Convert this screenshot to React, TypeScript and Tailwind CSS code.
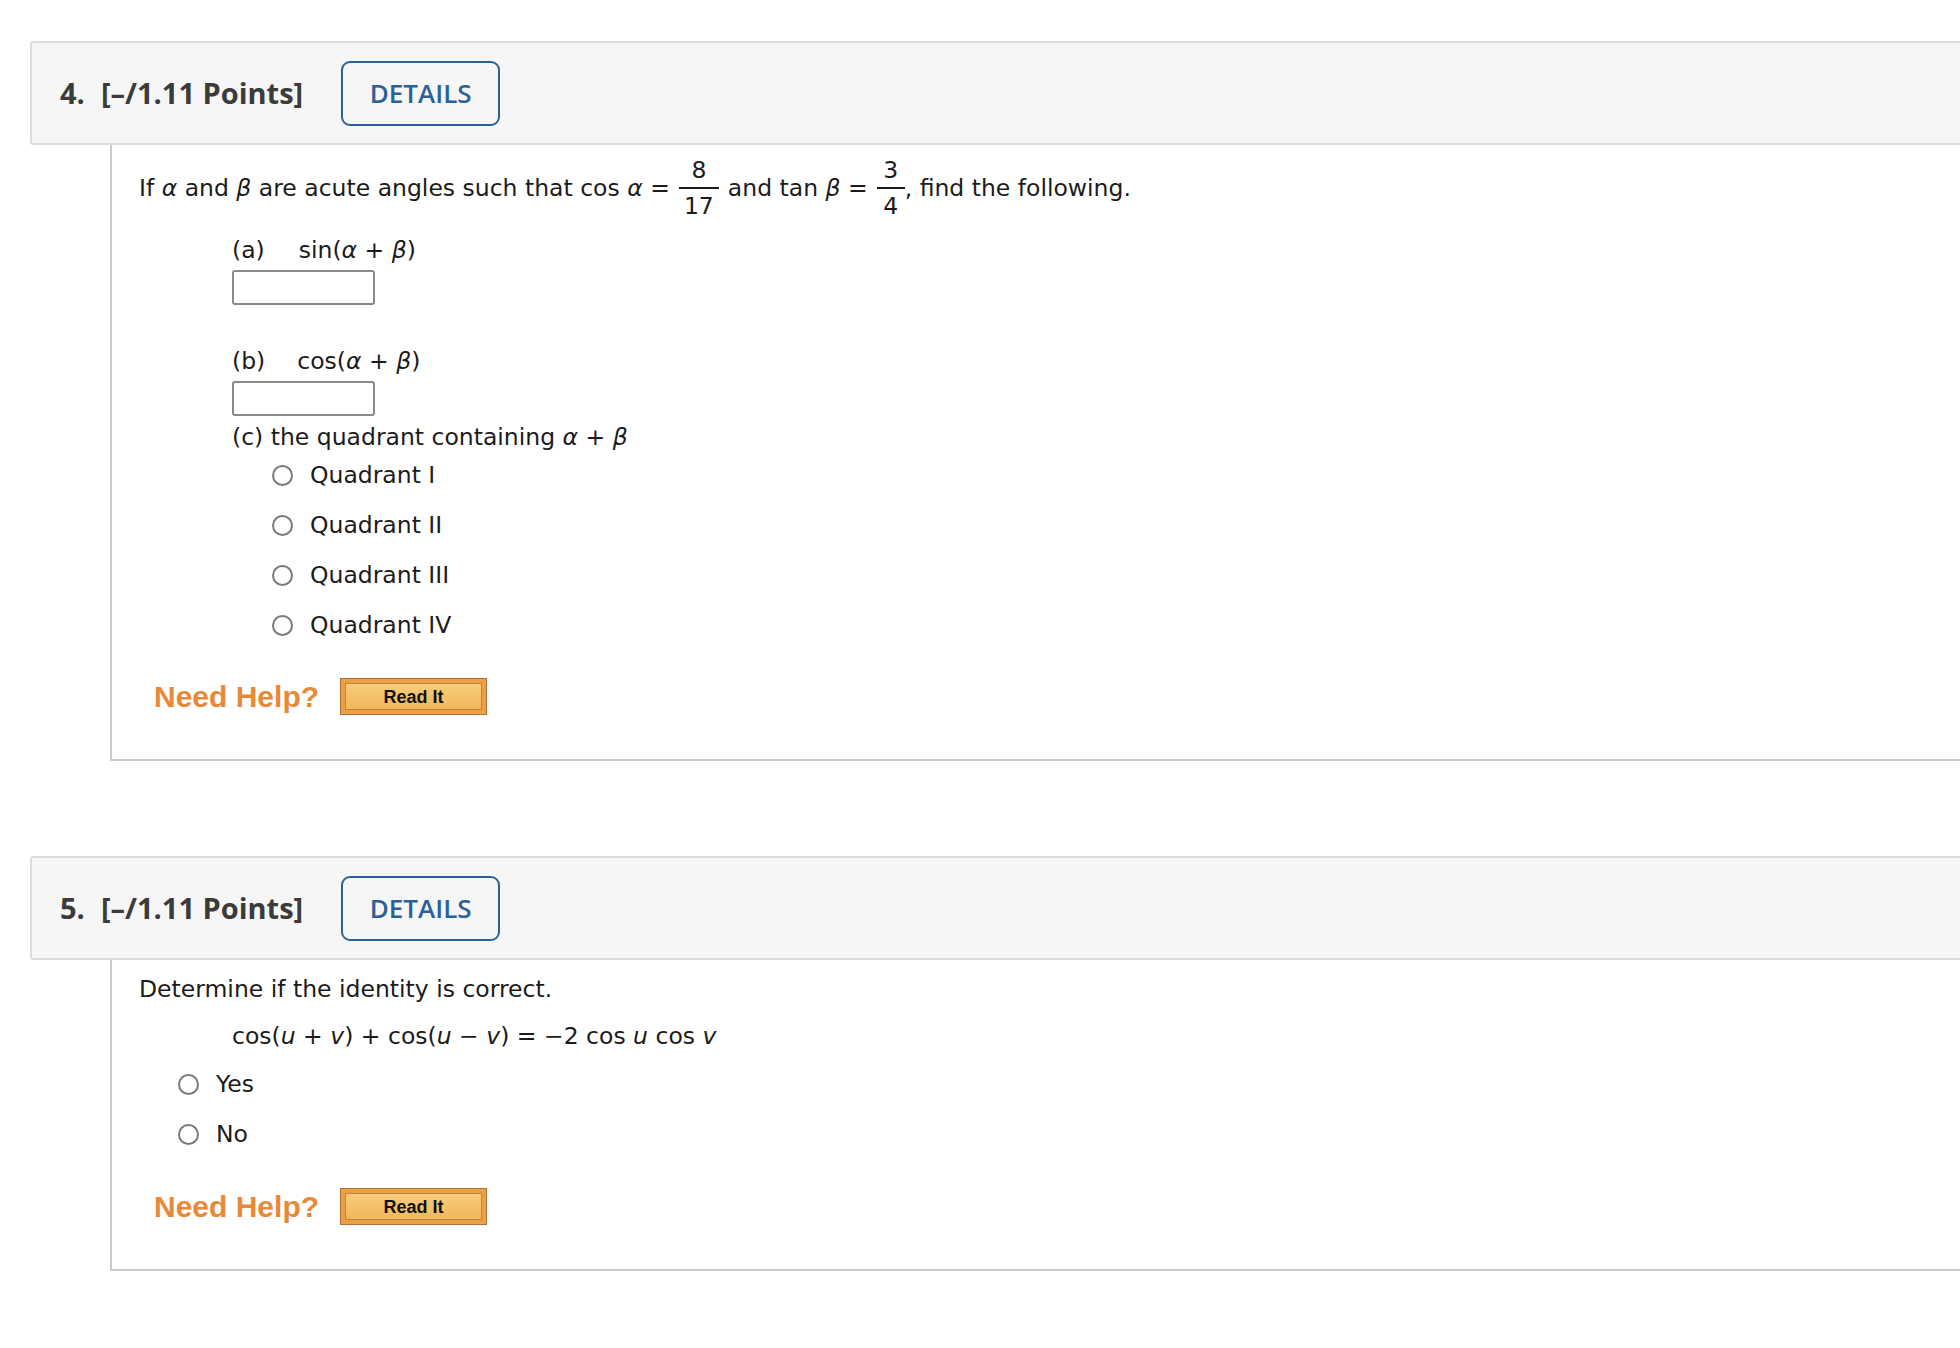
import React from "react";

const body = "font-['DejaVu_Sans',Verdana,sans-serif] text-[23.5px] leading-[28px] text-[#1b1b1b]";

function Header({ num }: { num: string }) {
  return (
    <div className="flex h-[104px] items-center rounded-l-[3px] border-y-2 border-l-2 border-[#dcdcdc] bg-[#f6f6f6] pl-[28px]">
      <div className="font-['Open_Sans',sans-serif] text-[29px] font-bold text-[#3b3b3b]">
        {num}.<span className="ml-[16px]">[–/1.11 Points]</span>
      </div>
      <button className="ml-[38px] h-[65px] w-[159px] rounded-[9px] border-2 border-[#2c6196] font-['Open_Sans',sans-serif] text-[26px] font-semibold text-[#2c6196]">
        DETAILS
      </button>
    </div>
  );
}

function Radio({ label }: { label: React.ReactNode }) {
  return (
    <div className="flex h-[28px] items-center">
      <span className="h-[21px] w-[21px] rounded-full border-2 border-[#7a7a7a] bg-white" />
      <span className="ml-[17px]">{label}</span>
    </div>
  );
}

function NeedHelp() {
  return (
    <div className="ml-[15px] flex items-center">
      <span className="font-['Liberation_Sans',Arial,sans-serif] text-[30px] font-bold text-[#e8893a]">Need Help?</span>
      <div className="ml-[21px] flex h-[37px] w-[147px] border border-[#a9733b] bg-[#ef9f42] p-[4px]">
        <div className="flex flex-1 items-center justify-center border border-[#b98646] bg-gradient-to-b from-[#f7cc7a] to-[#f1b75a] font-['Liberation_Sans',Arial,sans-serif] text-[18px] font-bold text-[#111]">
          Read It
        </div>
      </div>
    </div>
  );
}

function Frac({ n, d, w }: { n: string; d: string; w: string }) {
  return (
    <span className={`mx-[9px] inline-flex flex-col items-center align-middle leading-[30px] ${w}`}>
      <span>{n}</span>
      <span className="my-[2px] h-[2px] w-full bg-[#1b1b1b]" />
      <span>{d}</span>
    </span>
  );
}

const I = ({ children }: { children: React.ReactNode }) => <i>{children}</i>;

export default function App() {
  return (
    <div className="min-h-screen bg-white pt-[41px] pl-[30px]">
      {/* question 4 */}
      <Header num="4" />
      <div className={`ml-[80px] border-b-2 border-l-2 border-[#cacaca] pb-[44px] pl-[27px] pt-[8px] ${body}`}>
        <div className="flex h-[68px] items-center pt-[2px]">
          <span>If <I>α</I> and <I>β</I> are acute angles such that cos <I>α</I> =</span>
          <Frac n="8" d="17" w="w-[40px]" />
          <span>and tan <I>β</I> =</span>
          <Frac n="3" d="4" w="w-[28px]" />
          <span className="-ml-[9px]">, find the following.</span>
        </div>

        <div className="ml-[93px]">
          <div className="mt-[15px]">(a)<span className="ml-[34px]">sin(<I>α</I> + <I>β</I>)</span></div>
          <input className="mt-[6px] block h-[35px] w-[143px] rounded-[3px] border-2 border-[#8a8a8a] bg-white" />

          <div className="mt-[42px]">(b)<span className="ml-[32px]">cos(<I>α</I> + <I>β</I>)</span></div>
          <input className="mt-[6px] block h-[35px] w-[143px] rounded-[3px] border-2 border-[#8a8a8a] bg-white" />

          <div className="mt-[7px]">(c) the quadrant containing <I>α</I> + <I>β</I></div>
          <div className="mt-[10px] ml-[40px] flex flex-col gap-[22px]">
            <Radio label="Quadrant I" />
            <Radio label="Quadrant II" />
            <Radio label="Quadrant III" />
            <Radio label="Quadrant IV" />
          </div>
        </div>

        <div className="mt-[39px]">
          <NeedHelp />
        </div>
      </div>

      {/* question 5 */}
      <div className="mt-[95px]">
        <Header num="5" />
        <div className={`ml-[80px] border-b-2 border-l-2 border-[#cacaca] pb-[44px] pl-[27px] pt-[15px] ${body}`}>
          <div>Determine if the identity is correct.</div>
          <div className="mt-[19px] ml-[93px]">
            cos(<I>u</I> + <I>v</I>) + cos(<I>u</I> − <I>v</I>) = −2 cos <I>u</I> cos <I>v</I>
          </div>
          <div className="mt-[20px] ml-[39px] flex flex-col gap-[22px]">
            <Radio label="Yes" />
            <Radio label="No" />
          </div>
          <div className="mt-[40px]">
            <NeedHelp />
          </div>
        </div>
      </div>
    </div>
  );
}
